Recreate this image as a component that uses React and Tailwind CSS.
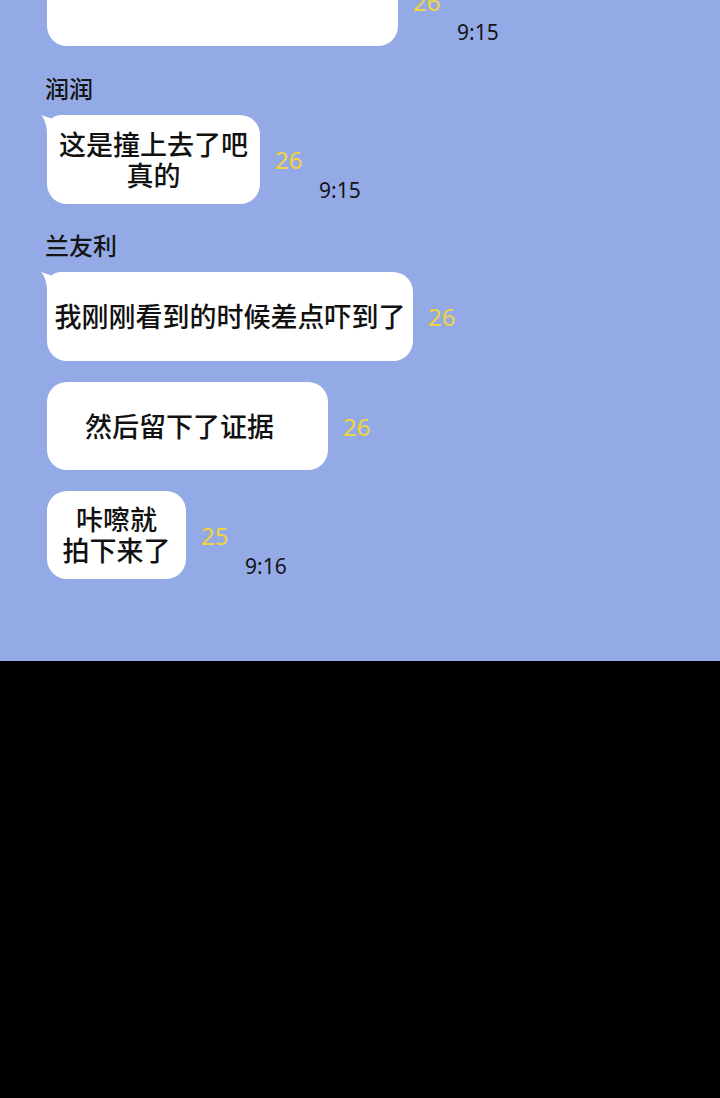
import React from "react";

const font = { fontFamily: '"Noto Sans", "Noto Sans CJK SC", sans-serif' };

const Tail = () => (
  <svg
    className="absolute left-[-6px] top-0"
    width="20"
    height="26"
    viewBox="0 0 20 26"
  >
    <path
      d="M0 0 C4 1 8 3 12 4 L12 26 L6 26 L6 17 C5.5 9 3 3 0 0 Z"
      fill="#ffffff"
    />
  </svg>
);

// count sits at the bubble's middle, time just below it
const Side = ({ count, time }) => (
  <div className="flex h-[88px] flex-col pt-[30px] text-[24px] leading-[30px]">
    <span className="ml-[15px] text-[#f2d43c]">{count}</span>
    {time && (
      <span className="ml-[59px] text-[21px] leading-[30px] text-[#151515]">
        {time}
      </span>
    )}
  </div>
);

const Bubble = ({ width, tail, short, children }) => (
  <div
    className={`relative flex shrink-0 items-center bg-white text-[27px] leading-[31px] font-medium text-[#111] ${
      tail ? "rounded-[20px] rounded-tl-[14px]" : "rounded-[20px]"
    } ${short ? "h-[88px]" : "h-[89px]"}`}
    style={{ width }}
  >
    {tail && <Tail />}
    {children}
  </div>
);

const messages = [
  { width: 351, count: 26, time: "9:15", text: null },
  {
    name: "润润",
    width: 213,
    count: 26,
    time: "9:15",
    tail: true,
    text: (
      <>
        这是撞上去了吧
        <br />
        真的
      </>
    ),
  },
  {
    name: "兰友利",
    width: 366,
    count: 26,
    tail: true,
    text: "我刚刚看到的时候差点吓到了",
  },
  {
    width: 281,
    count: 26,
    short: true,
    text: "然后留下了证据",
    align: "left",
  },
  {
    width: 139,
    count: 25,
    time: "9:16",
    short: true,
    text: (
      <>
        咔嚓就
        <br />
        拍下来了
      </>
    ),
  },
];

export default function App() {
  return (
    <div className="min-h-[1098px] w-[720px] bg-black" style={font}>
      <div className="h-[661px] overflow-hidden bg-[#94aae6] pl-[47px]">
        <div className="mt-[-43px] flex flex-col">
          {messages.map((m, i) => (
            <div key={i} className="flex flex-col">
              {m.name && (
                <div
                  className={`mb-[14px] ml-[-2px] h-[24px] text-[24px] leading-[24px] font-medium text-[#141414] ${
                    i === 1 ? "mt-[31px]" : "mt-[30px]"
                  }`}
                >
                  {m.name}
                </div>
              )}
              <div
                className={`flex items-start ${
                  i > 0 && !m.name ? "mt-[21px]" : ""
                }`}
              >
                <Bubble width={m.width} tail={m.tail} short={m.short}>
                  {m.text && (
                    <div
                      className={
                        m.align === "left"
                          ? "w-full whitespace-nowrap pl-[38px] text-left"
                          : "w-full whitespace-nowrap text-center"
                      }
                    >
                      {m.text}
                    </div>
                  )}
                </Bubble>
                <Side count={m.count} time={m.time} />
              </div>
            </div>
          ))}
        </div>
      </div>
    </div>
  );
}
